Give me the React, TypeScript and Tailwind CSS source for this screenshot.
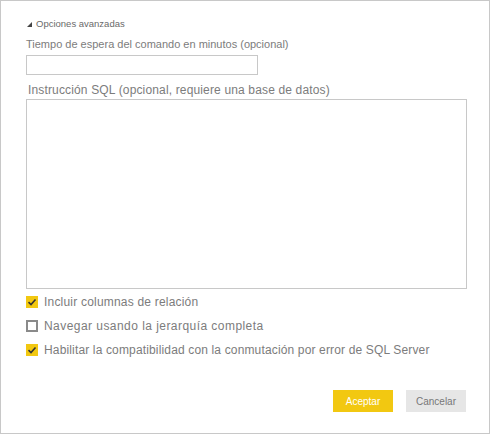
const Check = ({ checked }: { checked: boolean }) =>
  checked ? (
    <div className="w-[12px] h-[12px] bg-[#f2c811] flex items-center justify-center shrink-0">
      <svg width="10" height="10" viewBox="0 0 10 10">
        <path d="M1.5 5.2 L4 7.5 L8.5 2.5" stroke="#333" strokeWidth="1.6" fill="none" />
      </svg>
    </div>
  ) : (
    <div className="w-[12px] h-[12px] border-2 border-[#8a8a8a] bg-white shrink-0" />
  );

const options = [
  { label: "Incluir columnas de relación", checked: true, cls: "tracking-[0.2px]" },
  { label: "Navegar usando la jerarquía completa", checked: false, cls: "tracking-[0.45px]" },
  { label: "Habilitar la compatibilidad con la conmutación por error de SQL Server", checked: true, cls: "tracking-[0.15px]" },
];

const App = () => {
  return (
    <div className="w-[491px] h-[435px] bg-white" style={{ fontFamily: '"Liberation Sans", Arial, sans-serif' }}>
      <div className="w-[490px] h-[434px] border border-[#c8c8c8] pl-[25px] flex flex-col">
        <div className="mt-[16px] h-[14px] flex items-center gap-[4px] pl-[1px] text-[9.5px] text-[#6a6a6a]">
          <svg width="5" height="5" viewBox="0 0 5 5">
            <path d="M5 0 L5 5 L0 5 Z" fill="#444" />
          </svg>
          <span>Opciones avanzadas</span>
        </div>
        <div className="mt-[5px] h-[17px] text-[11px] leading-[17px] text-[#7c7c7c]">
          Tiempo de espera del comando en minutos (opcional)
        </div>
        <div className="mt-[2px] w-[232px] h-[20px] border border-[#c8c8c8]" />
        <div className="mt-[6px] h-[18px] pl-[2px] text-[12px] leading-[18px] tracking-[0.15px] text-[#7c7c7c]">
          Instrucción SQL (opcional, requiere una base de datos)
        </div>
        <div className="w-[441px] h-[190px] border border-[#c8c8c8]" />
        <div className="mt-[7px] flex flex-col gap-[12px]">
          {options.map((o) => (
            <div key={o.label} className="h-[12px] flex items-center gap-[6px]">
              <Check checked={o.checked} />
              <span className={`text-[12px] leading-[12px] text-[#7c7c7c] ${o.cls}`}>{o.label}</span>
            </div>
          ))}
        </div>
        <div className="mt-auto mb-[21px] flex justify-end gap-[13px] pr-[23px]">
          <button className="w-[60px] h-[22px] bg-[#f2c811] text-white text-[10px]">Aceptar</button>
          <button className="w-[60px] h-[22px] bg-[#e6e6e6] text-[#777] text-[10px]">Cancelar</button>
        </div>
      </div>
    </div>
  );
};

export default App;
